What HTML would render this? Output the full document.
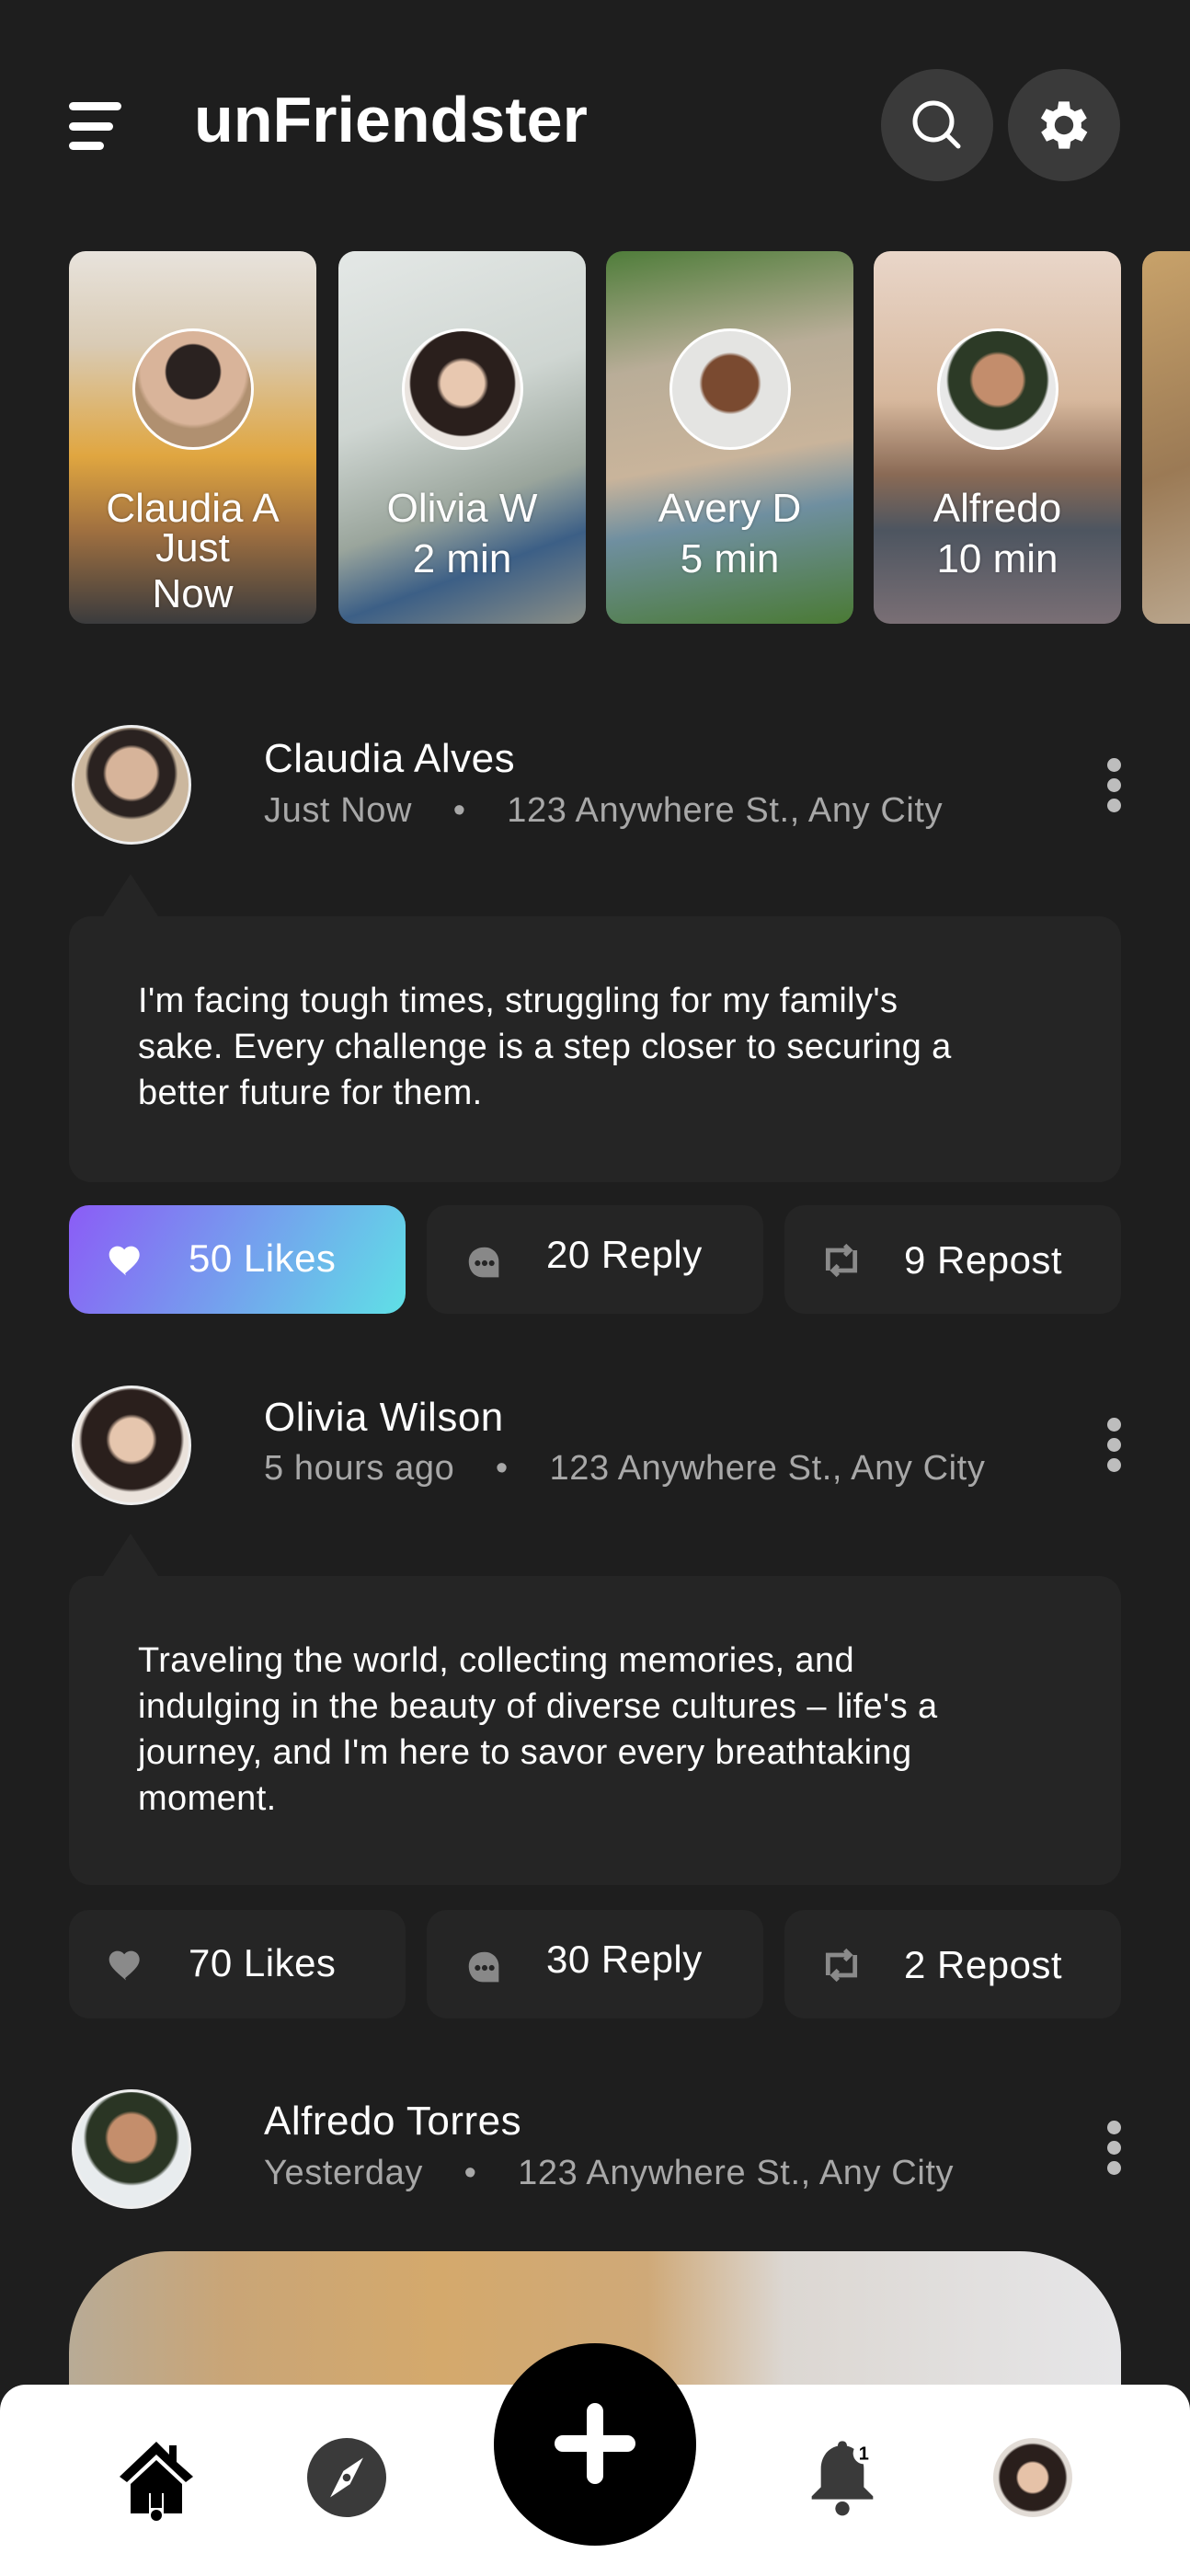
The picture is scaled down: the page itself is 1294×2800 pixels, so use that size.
<!DOCTYPE html>
<html><head><meta charset="utf-8"><style>
*{margin:0;padding:0;box-sizing:border-box}
body{width:1294px;height:2800px;background:#1e1e1e;position:relative;overflow:hidden;font-family:"Liberation Sans",sans-serif;color:#fff}
.a{position:absolute}
.card{position:absolute;top:273px;width:269px;height:405px;border-radius:18px;overflow:hidden}
.sav{position:absolute;left:69px;top:84px;width:132px;height:132px;border-radius:50%;border:3px solid #fff}
.sn{position:absolute;left:0;width:100%;text-align:center;font-size:44px;color:#fff;text-shadow:0 0 3px rgba(0,0,0,.3);white-space:nowrap}
.av{position:absolute;width:130px;height:130px;border-radius:50%;border:3px solid #eee;left:78px}
.name{position:absolute;left:287px;font-size:44px;color:#fff;letter-spacing:.5px}
.meta{position:absolute;left:287px;font-size:38px;color:#a8a8a8;white-space:pre;letter-spacing:.6px}
.dots{position:absolute;left:1204px;width:16px}
.dots i{display:block;width:15px;height:15px;border-radius:50%;background:#bdbdbd;margin-bottom:7px}
.bub{position:absolute;left:75px;width:1144px;background:#252525;border-radius:24px}
.tri{position:absolute;left:112px;width:0;height:0;border-left:30px solid transparent;border-right:30px solid transparent;border-bottom:46px solid #252525}
.txt{position:absolute;left:150px;font-size:38px;line-height:50px;color:#fff;white-space:nowrap;letter-spacing:.4px}
.btn{position:absolute;height:118px;width:366px;background:#252525;border-radius:22px;font-size:42px;color:#fff;letter-spacing:.5px}
.btn span{position:absolute;top:34px}
.btn svg{position:absolute;top:38px;left:40px}
</style></head><body>
<!-- header -->
<div class="a" style="left:75px;top:111px;width:57px;height:9px;background:#fff;border-radius:5px"></div>
<div class="a" style="left:75px;top:133px;width:48px;height:9px;background:#fff;border-radius:5px"></div>
<div class="a" style="left:75px;top:154px;width:38px;height:9px;background:#fff;border-radius:5px"></div>
<div class="a" style="left:211px;top:90px;font-size:70px;font-weight:bold;letter-spacing:0px">unFriendster</div>
<div class="a" style="left:958px;top:75px;width:122px;height:122px;border-radius:50%;background:#3a3a3a"></div>
<svg class="a" style="left:984px;top:101px" width="70" height="70" viewBox="0 0 70 70"><circle cx="31" cy="31" r="20" fill="none" stroke="#fff" stroke-width="5"/><line x1="45" y1="45" x2="58" y2="58" stroke="#fff" stroke-width="5" stroke-linecap="round"/></svg>
<div class="a" style="left:1096px;top:75px;width:122px;height:122px;border-radius:50%;background:#3a3a3a"></div>
<svg class="a" style="left:1122px;top:101px" width="70" height="70" viewBox="0 0 24 24"><path fill="#fff" d="M19.4 13a7.5 7.5 0 0 0 0-2l2.1-1.6-2-3.5-2.5 1a7 7 0 0 0-1.7-1L15 3.2h-4l-.4 2.7a7 7 0 0 0-1.7 1l-2.5-1-2 3.5L6.6 11a7.5 7.5 0 0 0 0 2l-2.1 1.6 2 3.5 2.5-1a7 7 0 0 0 1.7 1l.4 2.7h4l.4-2.7a7 7 0 0 0 1.7-1l2.5 1 2-3.5zM13 15.5A3.5 3.5 0 1 1 13 8.5a3.5 3.5 0 0 1 0 7z" transform="translate(-1 0)"/></svg>

<!-- stories -->
<div class="card" style="left:75px;background:linear-gradient(180deg,#e8e3dc 0%,#d9cbb5 25%,#e0a640 55%,#a07040 75%,#3b3b3d 100%)">
 <div class="sav" style="background:radial-gradient(circle at 50% 35%,#2a2220 0 28%,#d9b49a 30% 55%,#b09070 60%)"></div>
 <div class="sn" style="top:255px">Claudia A</div><div class="sn" style="top:298px">Just</div><div class="sn" style="top:348px">Now</div></div>
<div class="card" style="left:368px;background:linear-gradient(160deg,#e4e8e6 0%,#cfd6d2 40%,#9aa59c 65%,#3c5f86 80%,#8a8e86 100%)">
 <div class="sav" style="background:radial-gradient(circle at 50% 45%,#e8c8b0 0 25%,#2a1f1c 30% 60%,#eae4df 62%)"></div>
 <div class="sn" style="top:255px">Olivia W</div><div class="sn" style="top:310px">2 min</div></div>
<div class="card" style="left:659px;background:linear-gradient(170deg,#4f7d3a 0%,#b9ad98 30%,#c9b49b 55%,#6f8fa0 70%,#4a7a34 100%)">
 <div class="sav" style="background:radial-gradient(circle at 50% 45%,#7a4a30 0 32%,#e4e4e2 36%)"></div>
 <div class="sn" style="top:255px">Avery D</div><div class="sn" style="top:310px">5 min</div></div>
<div class="card" style="left:950px;background:linear-gradient(180deg,#e9d6c9 0%,#d7b89d 40%,#8a6a55 60%,#4d5560 75%,#7a6f75 100%)">
 <div class="sav" style="background:radial-gradient(circle at 50% 42%,#c38d6c 0 28%,#2c3a26 32% 55%,#e8e8e8 58%)"></div>
 <div class="sn" style="top:255px">Alfredo</div><div class="sn" style="top:310px">10 min</div></div>
<div class="card" style="left:1242px;background:linear-gradient(160deg,#c8a26a,#9b7a55 50%,#c6b8a4)"></div>

<!-- post 1 -->
<div class="av" style="top:788px;background:radial-gradient(circle at 50% 40%,#d7b49a 0 28%,#2a2220 32% 48%,#cbb79e 52%)"></div>
<div class="name" style="top:800px">Claudia Alves</div>
<div class="meta" style="top:860px">Just Now    •    123 Anywhere St., Any City</div>
<div class="dots" style="top:824px"><i></i><i></i><i></i></div>
<div class="tri" style="top:950px"></div>
<div class="bub" style="top:996px;height:289px"></div>
<div class="txt" style="top:1063px">I'm facing tough times, struggling for my family's<br>sake. Every challenge is a step closer to securing a<br>better future for them.</div>
<div class="btn" style="left:75px;top:1310px;background:linear-gradient(120deg,#8b5cf6,#5fe0e6)"><svg width="44" height="44" viewBox="0 0 24 24"><path fill="#fff" d="M12 21l-1.5-1.3C5 15 2 12.2 2 8.6 2 5.8 4.2 3.6 7 3.6c1.6 0 3.1.8 4 2 .9-1.2 2.4-2 4-2 2.8 0 5 2.2 5 5 0 3.6-3 6.4-8.5 11.1z"/></svg><span style="left:130px">50 Likes</span></div>
<div class="btn" style="left:464px;top:1310px"><svg width="46" height="46" viewBox="0 0 24 24" style="top:40px"><path fill="#888" d="M12 3C6.5 3 3 6.5 3 11c0 5 3 9 8 9h9v-9c0-4.5-3.5-8-8-8z"/><circle cx="8" cy="12" r="1.6" fill="#252525"/><circle cx="12" cy="12" r="1.6" fill="#252525"/><circle cx="16" cy="12" r="1.6" fill="#252525"/></svg><span style="left:130px;top:30px">20 Reply</span></div>
<div class="btn" style="left:853px;top:1310px"><svg width="44" height="44" viewBox="0 0 24 24"><path fill="none" stroke="#8a8a8a" stroke-width="2.6" d="M4 18V6h13M14 3l3 3-3 3M20 6v12H7M10 21l-3-3 3-3"/></svg><span style="left:130px;top:36px">9 Repost</span></div>

<!-- post 2 -->
<div class="av" style="top:1506px;background:radial-gradient(circle at 50% 45%,#e6c6ae 0 25%,#2a1f1c 30% 58%,#eae2db 62%)"></div>
<div class="name" style="top:1516px">Olivia Wilson</div>
<div class="meta" style="top:1575px">5 hours ago    •    123 Anywhere St., Any City</div>
<div class="dots" style="top:1541px"><i></i><i></i><i></i></div>
<div class="tri" style="top:1667px"></div>
<div class="bub" style="top:1713px;height:336px"></div>
<div class="txt" style="top:1780px">Traveling the world, collecting memories, and<br>indulging in the beauty of diverse cultures – life's a<br>journey, and I'm here to savor every breathtaking<br>moment.</div>
<div class="btn" style="left:75px;top:2076px"><svg width="44" height="44" viewBox="0 0 24 24"><path fill="#8a8a8a" d="M12 21l-1.5-1.3C5 15 2 12.2 2 8.6 2 5.8 4.2 3.6 7 3.6c1.6 0 3.1.8 4 2 .9-1.2 2.4-2 4-2 2.8 0 5 2.2 5 5 0 3.6-3 6.4-8.5 11.1z"/></svg><span style="left:130px">70 Likes</span></div>
<div class="btn" style="left:464px;top:2076px"><svg width="46" height="46" viewBox="0 0 24 24" style="top:40px"><path fill="#888" d="M12 3C6.5 3 3 6.5 3 11c0 5 3 9 8 9h9v-9c0-4.5-3.5-8-8-8z"/><circle cx="8" cy="12" r="1.6" fill="#252525"/><circle cx="12" cy="12" r="1.6" fill="#252525"/><circle cx="16" cy="12" r="1.6" fill="#252525"/></svg><span style="left:130px;top:30px">30 Reply</span></div>
<div class="btn" style="left:853px;top:2076px"><svg width="44" height="44" viewBox="0 0 24 24"><path fill="none" stroke="#8a8a8a" stroke-width="2.6" d="M4 18V6h13M14 3l3 3-3 3M20 6v12H7M10 21l-3-3 3-3"/></svg><span style="left:130px;top:36px">2 Repost</span></div>

<!-- post 3 -->
<div class="av" style="top:2271px;background:radial-gradient(circle at 50% 40%,#c48e6c 0 26%,#2a3524 30% 50%,#e8ecee 54%)"></div>
<div class="name" style="top:2281px">Alfredo Torres</div>
<div class="meta" style="top:2341px">Yesterday    •    123 Anywhere St., Any City</div>
<div class="dots" style="top:2305px"><i></i><i></i><i></i></div>
<div class="a" style="left:75px;top:2447px;width:1144px;height:300px;border-radius:110px 110px 0 0;background:linear-gradient(90deg,#b8ab96 0%,#c9a577 15%,#d4a96c 35%,#cfa978 55%,#dcd7d2 68%,#e6e6e8 100%)"></div>

<!-- bottom nav -->
<div class="a" style="left:0;top:2592px;width:1294px;height:208px;background:#fff;border-radius:28px 28px 0 0"></div>
<div class="a" style="left:537px;top:2547px;width:220px;height:220px;border-radius:50%;background:#000"></div>
<div class="a" style="left:603px;top:2647px;width:88px;height:18px;border-radius:9px;background:#fff"></div>
<div class="a" style="left:638px;top:2612px;width:18px;height:88px;border-radius:9px;background:#fff"></div>
<svg class="a" style="left:128px;top:2650px" width="84" height="92" viewBox="0 0 42 46"><path fill="#000" d="M21 2L1 21l4 3 16-15 16 15 4-3-9-8V4h-4v5z"/><path fill="#000" d="M7 25L21 12l14 13v16H25V30h-8v11H7z"/><circle cx="21" cy="42" r="3" fill="#000"/><rect x="18" y="30" width="6" height="8" fill="#000"/></svg>
<svg class="a" style="left:334px;top:2650px" width="86" height="86" viewBox="0 0 24 24"><circle cx="12" cy="12" r="12" fill="#3a3a3a"/><path fill="#fff" d="M17 6l-4 8-6 4 4-8z"/><circle cx="12" cy="12" r="1.2" fill="#3a3a3a"/></svg>
<svg class="a" style="left:876px;top:2650px" width="80" height="90" viewBox="0 0 24 27"><path fill="#3a3a3a" d="M12 1c1 0 1.5.7 1.5 1.6C17 3.4 19 6.5 19 10v6l3 3v1H2v-1l3-3v-6c0-3.5 2-6.6 5.5-7.4C10.5 1.7 11 1 12 1z"/><circle cx="12" cy="23" r="2.3" fill="#3a3a3a"/><circle cx="19" cy="5" r="3.5" fill="#fff"/><text x="19" y="7" font-size="6" text-anchor="middle" font-family="Liberation Sans" font-weight="bold" fill="#000">1</text></svg>
<div class="a" style="left:1080px;top:2650px;width:86px;height:86px;border-radius:50%;background:radial-gradient(circle at 50% 50%,#e6c2a8 0 26%,#2a1f1c 30% 58%,#e2dcd6 62%)"></div>
</body></html>
